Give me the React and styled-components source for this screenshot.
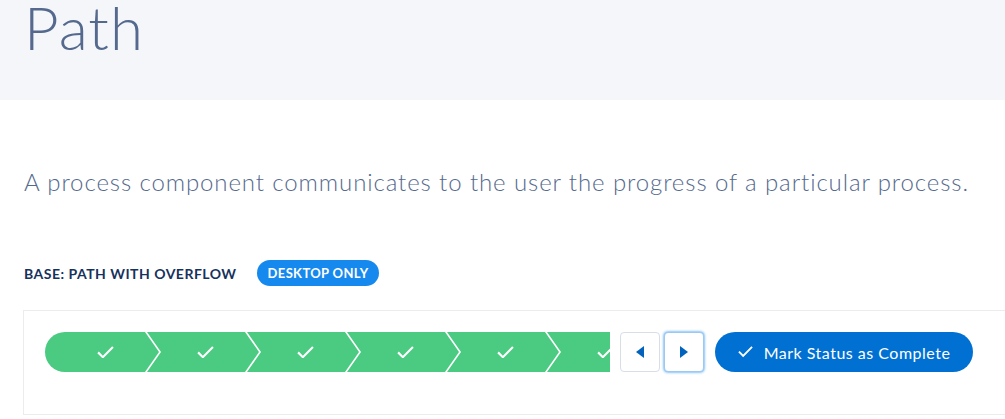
import React from 'react'
import styled, { createGlobalStyle } from 'styled-components'

const stages = [1, 2, 3, 4, 5, 6, 7]

function Check({ size = 16 }) {
    return (
        <svg width={size} height={size * 0.75} viewBox="0 0 16 12">
            <polyline points="1,6 5.5,10.5 15,1" fill="none" stroke="white" strokeWidth="2" />
        </svg>
    )
}

function Triangle({ dir }) {
    return (
        <svg width="8" height="12" viewBox="0 0 8 12">
            {dir === 'left'
                ? <polygon points="8,0 8,12 0,6" fill="#0262bd" />
                : <polygon points="0,0 0,12 8,6" fill="#0262bd" />}
        </svg>
    )
}

function App() {
    return (
        <>
            <GlobalStyle />
            <Header>
                <Title>Path</Title>
            </Header>
            <Description>
                A process component communicates to the user the progress of a particular process.
            </Description>
            <LabelRow>
                <Label>Base: Path with Overflow</Label>
                <Badge>Desktop Only</Badge>
            </LabelRow>
            <Card>
                <Track>
                    {stages.map((s, i) => (
                        <Stage key={s} first={i === 0}>
                            <Check size={17} />
                        </Stage>
                    ))}
                </Track>
                <NavGroup>
                    <NavButton>
                        <Triangle dir="left" />
                    </NavButton>
                    <NavButton focused>
                        <Triangle dir="right" />
                    </NavButton>
                </NavGroup>
                <MarkButton>
                    <Check size={15} />
                    <span>Mark Status as Complete</span>
                </MarkButton>
            </Card>
        </>
    )
}

const GlobalStyle = createGlobalStyle`
body {
    margin: 0;
    background: #fff;
    font-family: Lato, "Open Sans", sans-serif;
    overflow: hidden;
}
`

const Header = styled.div`
height: 100px;
background-color: #f4f6f9;
padding: 0 24px;
`

const Title = styled.h1`
margin: 0;
font-size: 60px;
font-weight: 300;
line-height: 54px;
letter-spacing: 1px;
color: #54698d;
`

const Description = styled.p`
margin: 64px 0 0 24px;
font-size: 24px;
font-weight: 300;
line-height: 36px;
letter-spacing: 0.9px;
color: #54698d;
white-space: nowrap;
`

const LabelRow = styled.div`
display: flex;
align-items: center;
margin: 60px 0 0 24px;
height: 26px;
`

const Label = styled.h3`
margin: 0;
font-size: 14px;
font-weight: 700;
letter-spacing: 0.5px;
text-transform: uppercase;
color: #16325c;
`

const Badge = styled.span`
margin-left: 20px;
height: 26px;
padding: 0 11px;
display: flex;
align-items: center;
border-radius: 13px;
background-color: #1589ee;
color: #fff;
font-size: 13px;
font-weight: 700;
letter-spacing: 0.35px;
text-transform: uppercase;
`

const Card = styled.div`
display: flex;
align-items: center;
width: 1100px;
margin: 24px 0 0 23px;
padding: 21px 20px 42px 21px;
border: 1px solid #ececec;
border-right: none;
`

const Track = styled.div`
display: flex;
width: 565px;
height: 40px;
flex: none;
overflow: hidden;
border-radius: 20px 0 0 20px;
`

const Stage = styled.div`
flex: none;
width: 114px;
height: 40px;
margin-left: ${p => (p.first ? '0' : '-14px')};
padding: 0 14px 0 20px;
box-sizing: border-box;
display: flex;
align-items: center;
justify-content: center;
background-color: #4bca81;
clip-path: ${p => p.first
        ? 'polygon(0 0, calc(100% - 14px) 0, 100% 50%, calc(100% - 14px) 100%, 0 100%)'
        : 'polygon(2px 0, calc(100% - 14px) 0, 100% 50%, calc(100% - 14px) 100%, 2px 100%, 16px 50%)'};
`

const NavGroup = styled.div`
display: flex;
gap: 4px;
margin-left: 10px;
`

const NavButton = styled.button`
width: 40px;
height: 40px;
padding: 0;
display: flex;
align-items: center;
justify-content: center;
background: #fff;
border-radius: 4px;
border: 1px solid ${p => (p.focused ? '#9ec8f0' : '#d8dde6')};
box-shadow: ${p => (p.focused ? '0 0 3px #1589ee' : 'none')};
`

const MarkButton = styled.button`
width: 258px;
height: 40px;
margin-left: 11px;
display: flex;
align-items: center;
justify-content: center;
gap: 11px;
border: none;
border-radius: 20px;
background-color: #0070d2;
color: #fff;
font-family: Lato, sans-serif;
font-size: 16px;
letter-spacing: 0.5px;
`

export default App
